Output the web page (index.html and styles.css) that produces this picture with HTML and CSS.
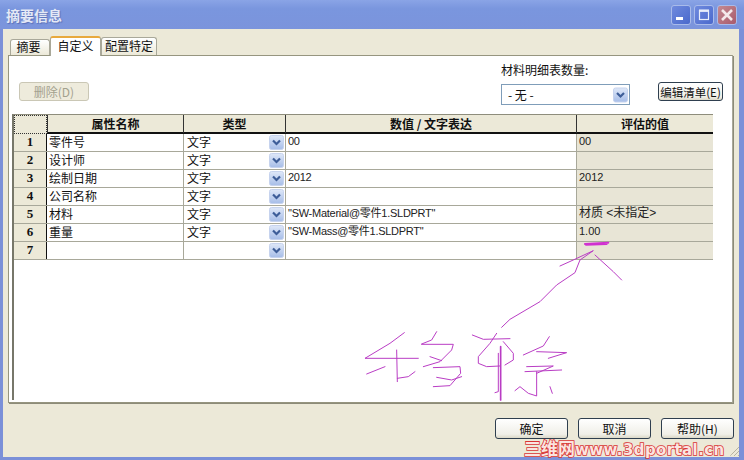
FILE: index.html
```html
<!DOCTYPE html>
<html lang="zh">
<head>
<meta charset="utf-8">
<title>摘要信息</title>
<link rel="stylesheet" href="styles.css">
</head>
<body>
<svg class="defs" width="0" height="0">
  <defs>
    <linearGradient id="arrowFill" x1="0" y1="0" x2="0" y2="1">
      <stop offset="0" stop-color="#dfe8f8"/>
      <stop offset="1" stop-color="#a6bde8"/>
    </linearGradient>
    <symbol id="chevron" viewBox="0 0 15 15">
      <rect x=".5" y=".5" width="14" height="14" rx="2" fill="url(#arrowFill)" stroke="#c6d3ee"/>
      <path d="M4 5.5 7.5 9 11 5.5" fill="none" stroke="#3d5d98" stroke-width="2.2"/>
    </symbol>
  </defs>
</svg>
<div class="window">
  <div class="titlebar">
    <span class="title">摘要信息</span>
    <div class="caption">
      <span class="cap"><svg width="18" height="18" viewBox="0 0 18 18"><rect x="4" y="11" width="7" height="3" fill="#fff"/></svg></span>
      <span class="cap"><svg width="18" height="18" viewBox="0 0 18 18"><rect x="4.5" y="4.5" width="9" height="9" fill="none" stroke="#e8eefa" stroke-width="1.2"/><rect x="4" y="3.5" width="10" height="2.4" fill="#e8eefa"/></svg></span>
      <span class="cap cap-close"><svg width="18" height="18" viewBox="0 0 18 18"><path d="M4 4 14 14M14 4 4 14" stroke="#f4e8ea" stroke-width="2.6"/></svg></span>
    </div>
  </div>
  <div class="client">
    <div class="tabs">
      <span class="tab tab-first">摘要</span>
      <span class="tab tab-active">自定义</span>
      <span class="tab tab-last">配置特定</span>
    </div>
    <div class="panel">
      <div class="toolbar">
        <button class="btn btn-disabled">删除(D)</button>
        <div class="bom">
          <label class="bom-label">材料明细表数量:</label>
          <div class="combo"><span class="combo-text">- 无 -</span><svg class="arrow-lg"><use href="#chevron"/></svg></div>
        </div>
        <button class="btn btn-edit">编辑清单(E)</button>
      </div>
      <div class="grid">
        <div class="row head">
          <div class="corner"></div><div class="hcell">属性名称</div><div class="hcell">类型</div><div class="hcell">数值 / 文字表达</div><div class="hcell">评估的值</div>
        </div>
        <div class="row">
          <div class="num">1</div><div class="cell">零件号</div><div class="cell type">文字<svg class="arrow"><use href="#chevron"/></svg></div><div class="cell val">00</div><div class="cell eval">00</div>
        </div>
        <div class="row">
          <div class="num">2</div><div class="cell">设计师</div><div class="cell type">文字<svg class="arrow"><use href="#chevron"/></svg></div><div class="cell val"></div><div class="cell eval"></div>
        </div>
        <div class="row">
          <div class="num">3</div><div class="cell">绘制日期</div><div class="cell type">文字<svg class="arrow"><use href="#chevron"/></svg></div><div class="cell val">2012</div><div class="cell eval">2012</div>
        </div>
        <div class="row">
          <div class="num">4</div><div class="cell">公司名称</div><div class="cell type">文字<svg class="arrow"><use href="#chevron"/></svg></div><div class="cell val"></div><div class="cell eval"></div>
        </div>
        <div class="row">
          <div class="num">5</div><div class="cell">材料</div><div class="cell type">文字<svg class="arrow"><use href="#chevron"/></svg></div><div class="cell val">"SW-Material@零件1.SLDPRT"</div><div class="cell eval eval-wide">材质 &lt;未指定&gt;</div>
        </div>
        <div class="row">
          <div class="num">6</div><div class="cell">重量</div><div class="cell type">文字<svg class="arrow"><use href="#chevron"/></svg></div><div class="cell val">"SW-Mass@零件1.SLDPRT"</div><div class="cell eval">1.00</div>
        </div>
        <div class="row">
          <div class="num">7</div><div class="cell"></div><div class="cell type"><svg class="arrow"><use href="#chevron"/></svg></div><div class="cell val"></div><div class="cell eval"></div>
        </div>
      </div>
    </div>
    <div class="actions">
      <button class="btn btn-action">确定</button>
      <button class="btn btn-action">取消</button>
      <button class="btn btn-action">帮助(H)</button>
    </div>
  </div>
</div>
<svg class="ink" width="744" height="460" viewBox="0 0 744 460">
  <g transform="translate(340 240) scale(.3333)" fill="none" stroke="#b93cc4" stroke-width="3" stroke-linecap="round" stroke-linejoin="round">
    <path d="M193 278 150 310 75 355H235"/>
    <path d="M170 330 172 425"/>
    <path d="M172 415 205 410 225 395"/>
    <path d="M80 402 135 380"/>
    <path d="M290 275 275 300 245 312"/>
    <path d="M245 313H340L335 330 300 365 250 380"/>
    <path d="M270 350 305 362"/>
    <path d="M280 383 360 380 362 400 330 437 280 440"/>
    <path d="M290 412 335 420 365 410"/>
    <path d="M397 285 430 298 510 296"/>
    <path d="M470 280 450 310 415 350V370L440 380 480 378"/>
    <path d="M482 320V480" stroke-width="5"/>
    <path d="M475 340V455L465 458"/>
    <path d="M490 305 520 340V360L495 375"/>
    <path d="M628 290 610 318 550 345"/>
    <path d="M590 335 680 338 625 355"/>
    <path d="M555 395 665 390"/>
    <path d="M560 380 640 378 590 400"/>
    <path d="M590 395V468L565 460 540 440 525 452"/>
    <path d="M630 440 637 460"/>
    <path d="M485 262 510 238 600 185 650 135 705 98 720 60 760 32 700 60 660 78"/>
    <path d="M765 45 820 95 845 120"/>
    <path d="M735 12 805 8M738 14 800 12" stroke-width="6" stroke="#d030d0"/>
  </g>
</svg>
<span class="grip"></span>
<span class="watermark">三维网<span class="watermark-url">www.3dportal.cn</span></span>
</body>
</html>
```
FILE: styles.css
```css
* { box-sizing: border-box; }
html, body { margin: 0; padding: 0; }
body {
  position: relative;
  width: 744px;
  height: 460px;
  overflow: hidden;
  font-family: "Noto Sans CJK SC", "Liberation Sans", sans-serif;
  font-size: 12px;
  color: #111;
}
.defs { position: absolute; }
.window {
  width: 744px;
  height: 460px;
  display: flex;
  flex-direction: column;
  background: #7b90d8;
  padding: 0 5px 3px 3px;
}
.titlebar {
  height: 29px;
  margin: 0 -5px 0 -3px;
  padding: 0 7px 0 6px;
  display: flex;
  align-items: center;
  justify-content: space-between;
  background: linear-gradient(#8aa4e6 0, #7a96de 30%, #7b94dc 100%);
}
.title {
  font-size: 14px;
  font-weight: 700;
  color: #e4e9f6;
  text-shadow: 1px 1px 1px #5a70b8;
}
.caption { display: flex; gap: 3px; }
.cap {
  width: 20px;
  height: 20px;
  display: block;
  border: 1px solid #a9bbea;
  border-radius: 3px;
  background: linear-gradient(135deg, #6f8ade, #4a69cc);
}
.cap svg { display: block; }
.cap-close { background: linear-gradient(135deg, #c48a92, #a85a6c); }
.client {
  flex: 1;
  display: flex;
  flex-direction: column;
  background: #ece9d8;
  padding: 6px 0 0 5px;
}
.tabs {
  display: flex;
  align-items: flex-end;
  height: 20px;
  padding-left: 2px;
}
.tab {
  height: 16px;
  line-height: 14px;
  text-align: center;
  background: linear-gradient(#fff, #ece9d8);
  border: 1px solid #a9a899;
  border-bottom: 0;
  border-radius: 3px 3px 0 0;
  white-space: nowrap;
}
.tab-first { width: 40px; padding-right: 3px; }
.tab-active {
  height: 20px;
  width: 51px;
  line-height: 15px;
  background: #fff;
  border-top: 2px solid #e8a93c;
  margin-bottom: -1px;
  position: relative;
}
.tab-last { width: 56px; height: 18px; line-height: 16px; }
.panel {
  width: 725px;
  height: 348px;
  background: #fff;
  border: 1px solid #96957f;
  border-right-color: #aaa99a;
  box-shadow: 1px 1px 0 #8c8b78;
  padding: 0 0 2px 3px;
  display: flex;
  flex-direction: column;
}
.toolbar {
  height: 58px;
  display: flex;
  align-items: flex-start;
  padding-left: 7px;
}
.btn {
  font: inherit;
  color: #111;
  background: linear-gradient(#fff, #f0efe8 80%, #dcd9c8);
  border: 1px solid #2f3f4f;
  border-radius: 3px;
  padding: 0;
  white-space: nowrap;
}
.btn-disabled {
  width: 70px;
  height: 19px;
  margin-top: 26px;
  color: #a3a18e;
  background: #eeebdc;
  border-color: #cac7b5;
}
.bom {
  margin-left: 412px;
  margin-top: 7px;
  width: 129px;
  display: flex;
  flex-direction: column;
  gap: 7px;
}
.bom-label { line-height: 14px; white-space: nowrap; }
.combo {
  width: 129px;
  height: 21px;
  border: 1px solid #7f9db9;
  display: flex;
  align-items: center;
  justify-content: space-between;
  padding: 0 1px 0 6px;
}
.btn-edit {
  width: 65px;
  height: 19px;
  margin-left: 28px;
  margin-top: 26px;
  font-size: 11.5px;
}
.arrow { width: 15px; height: 15px; display: block; margin: 1px 0 0 auto; flex: none; }
.arrow-lg { width: 15px; height: 18px; display: block; flex: none; }
.grid {
  flex: 1;
  border-left: 2px solid #77776a;
  border-top: 1px solid #8e8d7c;
  width: 701px;
}
.row {
  display: grid;
  grid-template-columns: 33px 136px 102px 291px 137px;
  height: 18px;
  border-bottom: 1px solid #a8a89a;
}
.head { height: 19px; border-bottom: 2px solid #111; background: #ece9d8; }
.corner { border: 1px dotted #333; background: #ece9d8; margin-bottom: -1px; }
.hcell {
  font-weight: 700;
  text-align: center;
  line-height: 18px;
  border-left: 1px solid #333;
}
.num {
  background: #ece9d8;
  font-family: "Liberation Serif", serif;
  font-weight: 700;
  font-size: 13px;
  line-height: 16px;
  text-align: center;
  border-right: 1px solid #111;
}
.cell {
  line-height: 15px;
  padding-left: 2px;
  border-left: 1px solid #a8a89a;
  white-space: nowrap;
  overflow: hidden;
}
.num + .cell { border-left: 0; }
.type {
  padding-left: 3px;
  display: flex;
  padding-right: 1px;
}
.val {
  font-family: "Liberation Sans", "Noto Sans CJK SC", sans-serif;
  font-size: 11px;
  letter-spacing: -.27px;
  color: #222;
}
.eval {
  background: #e8e5d6;
  font-family: "Liberation Sans", "Noto Sans CJK SC", sans-serif;
  font-size: 11px;
  color: #222;
}
.eval-wide { font-size: 12px; }
.actions {
  display: flex;
  justify-content: flex-end;
  gap: 10px;
  margin-top: 15px;
  padding-right: 5px;
}
.btn-action { width: 73px; height: 21px; }
.ink {
  position: absolute;
  left: 0;
  top: 0;
  pointer-events: none;
}
.grip {
  position: absolute;
  left: 730px;
  top: 444px;
  width: 9px;
  height: 12px;
  background: repeating-linear-gradient(135deg, transparent 0 2px, #b5b2a0 2px 3px);
  clip-path: polygon(100% 0, 100% 100%, 0 100%);
}
.watermark {
  position: absolute;
  left: 524px;
  top: 439px;
  font-family: "Noto Sans CJK SC", "DejaVu Sans", sans-serif;
  font-size: 17px;
  font-weight: 700;
  line-height: 17px;
  color: #fbe4e0;
  -webkit-text-stroke: 1.6px #d83434;
  paint-order: stroke fill;
  white-space: nowrap;
}
.watermark-url {
  font-family: "DejaVu Sans", sans-serif;
  font-size: 15px;
  letter-spacing: .4px;
}
```
